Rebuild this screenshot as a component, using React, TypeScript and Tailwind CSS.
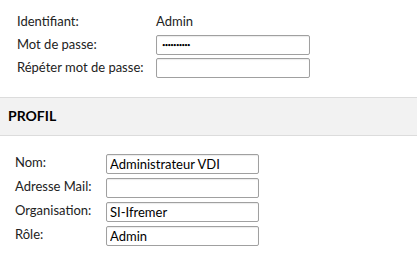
import React from 'react'

const inputCls =
  'h-[20px] border border-[#a0a0a0] rounded-[2px] bg-white px-[3px] text-black outline-none shadow-[inset_0_1px_1px_rgba(0,0,0,0.08)]'

const profil = [
  { label: 'Nom:', value: 'Administrateur VDI' },
  { label: 'Adresse Mail:', value: '' },
  { label: 'Organisation:', value: 'SI-Ifremer' },
  { label: 'Rôle:', value: 'Admin' },
]

export default function App() {
  return (
    <div className="w-[417px] h-[260px] bg-white text-[13px] text-[#222] overflow-hidden font-['Lato',sans-serif]">
      <div className="pt-[10px] pl-[17px]">
        <div className="flex items-center h-[23px]">
          <div className="w-[139px]">Identifiant:</div>
          <div>Admin</div>
        </div>
        <div className="flex items-center h-[23px]">
          <div className="w-[139px]">Mot de passe:</div>
          <input
            type="password"
            defaultValue="adminadmin"
            className={`${inputCls} w-[154px] pl-[5px] text-[6px] tracking-[-0.7px]`}
          />
        </div>
        <div className="flex items-center h-[23px]">
          <div className="w-[139px]">Répéter mot de passe:</div>
          <input type="password" className={`${inputCls} w-[154px] text-[13px]`} />
        </div>
      </div>

      <div className="mt-[18px] h-[39px] bg-[#f2f2f2] border-y border-[#dcdcdc] flex items-center pl-[8px] pb-[3px]">
        <span className="text-[14px] font-bold text-black">PROFIL</span>
      </div>

      <div className="pt-[16px] pl-[15px]">
        {profil.map((row) => (
          <div key={row.label} className="flex items-center h-[24px]">
            <div className="w-[91px] -mt-[3px]">{row.label}</div>
            <input
              type="text"
              defaultValue={row.value}
              className={`${inputCls} w-[153px] text-[13px]`}
            />
          </div>
        ))}
      </div>
    </div>
  )
}
